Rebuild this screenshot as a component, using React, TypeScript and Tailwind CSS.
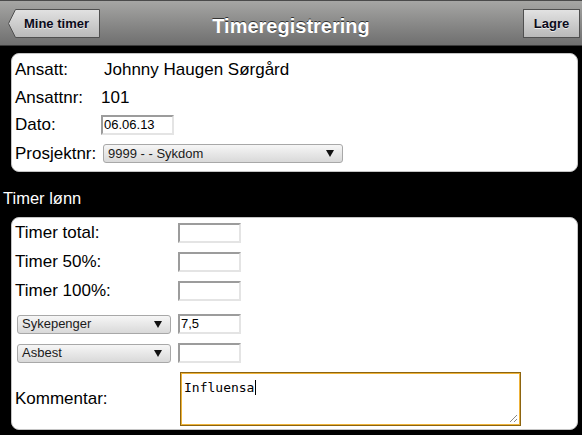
const inputCls =
  "h-[20px] w-[63px] bg-white border-2 border-t-[#9c9c9c] border-l-[#9c9c9c] border-b-[#e4e4e4] border-r-[#e4e4e4] px-[1px] text-[13px] leading-[16px] text-black";

function Arrow() {
  return (
    <svg width="8" height="7" viewBox="0 0 8 7" className="shrink-0">
      <polygon points="0,0 8,0 4,7" fill="#111" />
    </svg>
  );
}

function FakeSelect({ label, width, className = "" }: { label: string; width: string; className?: string }) {
  return (
    <div
      className={`h-[19px] ${width} flex items-center justify-between rounded-[3px] border border-[#a8a8a8] bg-gradient-to-b from-[#f6f6f6] to-[#d9d9d9] pl-[4px] pr-[8px] text-[13px] text-[#1a1a1a] ${className}`}
    >
      <span>{label}</span>
      <Arrow />
    </div>
  );
}

function Row({ label, children, labelWidth = "w-[89px]", h }: { label: string; children: React.ReactNode; labelWidth?: string; h: string }) {
  return (
    <div className={`flex items-center ${h}`}>
      <span className={`${labelWidth} shrink-0 pl-[3px] text-[17px] text-black`}>{label}</span>
      {children}
    </div>
  );
}

export default function App() {
  return (
    <div className="w-[582px] h-[435px] overflow-hidden bg-black font-['Liberation_Sans',Arial,sans-serif]">
      <header className="relative h-[46px] flex items-center justify-between border-t border-b border-t-[#4a4a4a] border-b-[#3a3a3a] bg-gradient-to-b from-[#a6a6a4] to-[#6f6f6f] pl-[8px] pr-[2px]">
        <button className="relative mt-[1px] h-[29px] w-[92px] flex items-center justify-end pr-[11px]">
          <svg className="absolute inset-0" width="92" height="29" viewBox="0 0 92 29">
            <defs>
              <linearGradient id="bk" x1="0" y1="0" x2="0" y2="1">
                <stop offset="0" stopColor="#e2e2e2" />
                <stop offset="1" stopColor="#b9b9b9" />
              </linearGradient>
            </defs>
            <polygon points="0.5,14.5 7.5,0.5 91.5,0.5 91.5,28.5 7.5,28.5" fill="url(#bk)" stroke="#4f4f4f" strokeWidth="1" />
          </svg>
          <span className="relative text-[13px] font-bold text-[#0a0a1a] [text-shadow:0_1px_0_#ededed]">Mine timer</span>
        </button>
        <h1 className="absolute left-0 right-0 top-[10px] text-center text-[20px] font-bold text-white [text-shadow:0_-1px_0_#333] pointer-events-none">
          Timeregistrering
        </h1>
        <button className="mt-[1px] h-[29px] w-[57px] flex items-center justify-center border border-[#4f4f4f] bg-gradient-to-b from-[#e2e2e2] to-[#b9b9b9] text-[13px] font-bold text-[#0a0a1a] [text-shadow:0_1px_0_#ededed]">
          Lagre
        </button>
      </header>

      <section className="ml-[11px] mr-[4px] mt-[7px] rounded-[8px] border border-[#c4c4c4] bg-white pt-[2px] pb-[3px]">
        <Row label="Ansatt:" h="h-[28px]">
          <span className="ml-[3px] text-[17px] text-black">Johnny Haugen Sørgård</span>
        </Row>
        <Row label="Ansattnr:" h="h-[27px]">
          <span className="text-[17px] text-black">101</span>
        </Row>
        <Row label="Dato:" h="h-[28px]">
          <div className={`${inputCls} w-[73px] flex items-center`}>06.06.13</div>
        </Row>
        <Row label="Prosjektnr:" h="h-[29px]" labelWidth="w-[91px]">
          <FakeSelect label="9999 - - Sykdom" width="w-[240px]" />
        </Row>
      </section>

      <h2 className="mt-[14px] h-[24px] flex items-center pl-[3px] text-[16.5px] text-white">Timer lønn</h2>

      <section className="ml-[11px] mr-[4px] mt-[7px] rounded-[8px] border border-[#c4c4c4] bg-white pt-[5px] pb-[3px] flex flex-col gap-[9px]">
        {["Timer total:", "Timer 50%:", "Timer 100%:"].map((l) => (
          <div key={l} className="flex items-center h-[20px]">
            <span className="w-[166px] shrink-0 pl-[3px] text-[17px] text-black">{l}</span>
            <div className={inputCls} />
          </div>
        ))}
        <div className="mt-[4px] flex items-center h-[20px]">
          <div className="w-[166px] shrink-0 pl-[5px]">
            <FakeSelect label="Sykepenger" width="w-[154px]" />
          </div>
          <div className={`${inputCls} flex items-center`}>7,5</div>
        </div>
        <div className="flex items-center h-[20px]">
          <div className="w-[166px] shrink-0 pl-[5px]">
            <FakeSelect label="Asbest" width="w-[154px]" />
          </div>
          <div className={inputCls} />
        </div>
        <div className="flex items-center h-[54px]">
          <span className="w-[168px] shrink-0 pl-[3px] text-[17px] text-black">Kommentar:</span>
          <div className="relative h-[54px] w-[341px] border border-[#8c6410] shadow-[inset_0_0_0_1px_#eeb33a] bg-white px-[3px] pt-[2px]">
            <span className="font-['DejaVu_Sans_Mono',monospace] text-[13px] leading-[16px] text-black">Influensa</span>
            <span className="inline-block align-[-3px] ml-[1px] h-[15px] w-px bg-black" />
            <svg className="absolute right-[2px] bottom-[2px]" width="9" height="9" viewBox="0 0 9 9">
              <line x1="8" y1="1" x2="1" y2="8" stroke="#888" strokeWidth="1" />
              <line x1="8" y1="5" x2="5" y2="8" stroke="#888" strokeWidth="1" />
            </svg>
          </div>
        </div>
      </section>
    </div>
  );
}
